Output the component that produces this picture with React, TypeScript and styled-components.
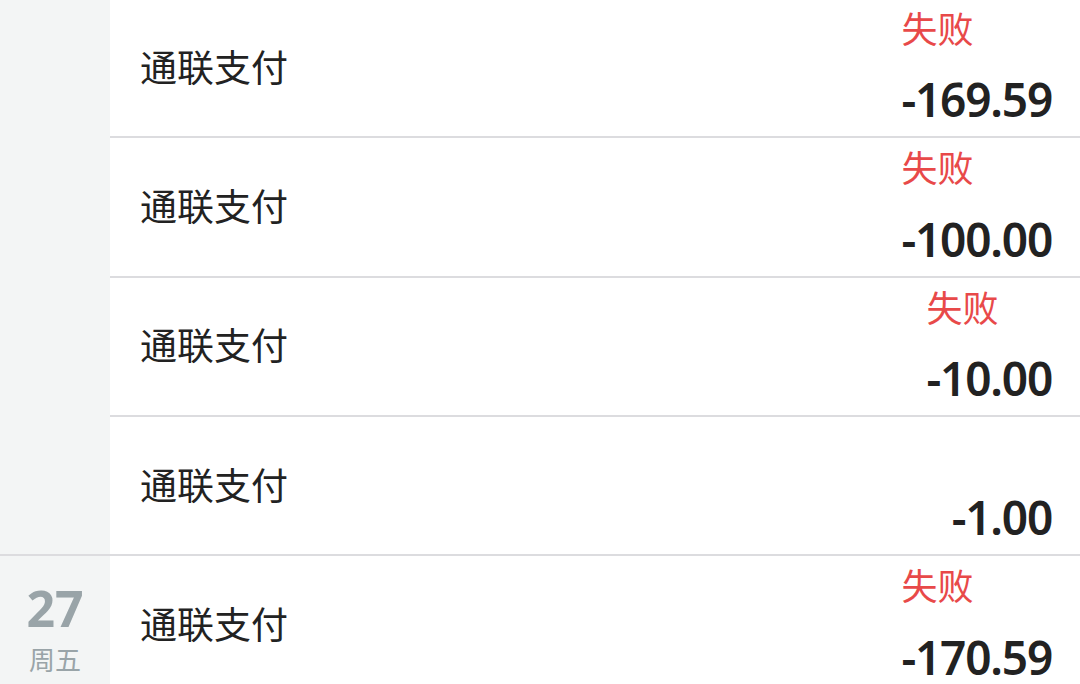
import React from "react";
import styled, { createGlobalStyle } from "styled-components";

const Global = createGlobalStyle`
  html, body { margin: 0; padding: 0; background: #ffffff; overflow: hidden; }
  body { font-family: "Noto Sans", "Noto Sans CJK SC", sans-serif; }
`;

const Page = styled.div`
  width: 1080px;
  height: 684px;
  overflow: hidden;
  background: #ffffff;
`;

const Scroller = styled.div`
  margin-top: -1px;
`;

const Group = styled.section`
  display: grid;
  grid-template-columns: 110px 1fr;
  border-bottom: 2px solid #dcdcdf;
`;

const DateCol = styled.div`
  background: #f3f5f5;
  display: flex;
  flex-direction: column;
  align-items: center;
  padding-top: 27px;
  color: #99a4a8;
`;

const Day = styled.div`
  font-family: "Noto Sans", sans-serif;
  font-weight: 700;
  font-size: 50px;
  line-height: 50px;
`;

const Weekday = styled.div`
  font-family: "Noto Sans CJK SC", sans-serif;
  font-size: 26px;
  line-height: 34px;
  margin-top: 9px;
`;

const List = styled.div`
  display: flex;
  flex-direction: column;
`;

const Row = styled.div<{ $last?: boolean }>`
  height: 137.33px;
  display: flex;
  align-items: center;
  justify-content: space-between;
  padding: 0 28px 0 30px;
  border-bottom: ${(p) => (p.$last ? "none" : "2px solid #dcdcdf")};
`;

const Title = styled.div`
  font-family: "Noto Sans CJK SC", sans-serif;
  font-size: 37px;
  color: #222222;
  margin-bottom: 4px;
`;

const Right = styled.div`
  align-self: stretch;
  display: flex;
  flex-direction: column;
  align-items: flex-start;
  justify-content: space-between;
  padding: 5px 0 13px;
`;

const Status = styled.div`
  font-family: "Noto Sans CJK SC", sans-serif;
  font-size: 36px;
  line-height: 46px;
  height: 46px;
  color: #e84949;
`;

const Amount = styled.div`
  font-family: "Noto Sans", sans-serif;
  font-weight: 600;
  font-size: 46px;
  line-height: 48px;
  color: #222222;
  letter-spacing: -1.2px;
`;

type Item = { title: string; status?: string; amount: string };

const groups: { day?: string; week?: string; items: Item[] }[] = [
  {
    items: [
      { title: "通联支付", status: "失败", amount: "-169.59" },
      { title: "通联支付", status: "失败", amount: "-100.00" },
      { title: "通联支付", status: "失败", amount: "-10.00" },
      { title: "通联支付", amount: "-1.00" },
    ],
  },
  {
    day: "27",
    week: "周五",
    items: [{ title: "通联支付", status: "失败", amount: "-170.59" }],
  },
];

export default function App() {
  return (
    <Page>
      <Global />
      <Scroller>
        {groups.map((g, gi) => (
          <Group key={gi}>
            <DateCol>
              {g.day && <Day>{g.day}</Day>}
              {g.week && <Weekday>{g.week}</Weekday>}
            </DateCol>
            <List>
              {g.items.map((it, i) => (
                <Row key={i} $last={i === g.items.length - 1}>
                  <Title>{it.title}</Title>
                  <Right>
                    <Status>{it.status ?? ""}</Status>
                    <Amount>{it.amount}</Amount>
                  </Right>
                </Row>
              ))}
            </List>
          </Group>
        ))}
      </Scroller>
    </Page>
  );
}
